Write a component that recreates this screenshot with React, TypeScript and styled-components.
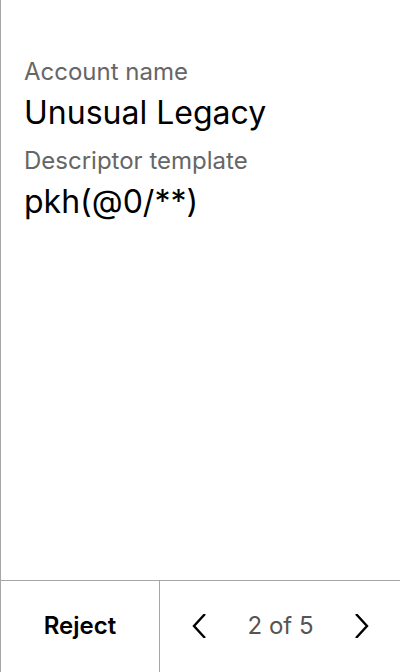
import { createGlobalStyle, styled } from 'styled-components';

const GlobalStyle = createGlobalStyle`
  html, body {
    margin: 0;
    padding: 0;
    background: #fff;
  }
  body {
    font-family: Inter, "Noto Sans", sans-serif;
  }
`;

const Screen = styled.div`
  width: 400px;
  height: 672px;
  box-sizing: border-box;
  border-left: 1px solid #a6a6a6;
  display: flex;
  flex-direction: column;
  background: #fff;
`;

const Body = styled.div`
  flex: 1;
  padding: 58px 24px 0 23px;
  display: flex;
  flex-direction: column;
  gap: 16px;
`;

const Field = styled.div`
  display: flex;
  flex-direction: column;
  gap: 9px;
`;

const Label = styled.div`
  font-size: 24px;
  line-height: 28px;
  color: #666;
`;

const Value = styled.div`
  font-size: 32px;
  line-height: 36px;
  color: #000;
`;

const Footer = styled.div`
  height: 92px;
  box-sizing: border-box;
  border-top: 1px solid #a6a6a6;
  display: flex;
`;

const RejectButton = styled.button`
  width: 159px;
  border: none;
  border-right: 1px solid #a6a6a6;
  background: none;
  font-family: inherit;
  font-size: 24px;
  font-weight: 600;
  color: #000;
  padding: 0 0 2px;
`;

const Pager = styled.div`
  flex: 1;
  display: flex;
  align-items: center;
  justify-content: space-between;
  padding: 0 27px 2px 28px;
`;

const ArrowButton = styled.button`
  width: 24px;
  height: 24px;
  padding: 0;
  border: none;
  background: none;
  display: flex;
  align-items: center;
  justify-content: center;
`;

const PageCount = styled.span`
  font-size: 24px;
  color: #555;
`;

const Chevron = ({ dir }: { dir: 'left' | 'right' }) => (
  <svg width="24" height="24" viewBox="0 0 24 24" fill="none">
    <path
      d={dir === 'left' ? 'M17 0 L6 12 L17 24' : 'M7 0 L18 12 L7 24'}
      stroke="#000"
      strokeWidth="2.4"
    />
  </svg>
);

const App = () => (
  <>
    <GlobalStyle />
    <Screen>
      <Body>
        <Field>
          <Label>Account name</Label>
          <Value>Unusual Legacy</Value>
        </Field>
        <Field>
          <Label>Descriptor template</Label>
          <Value>pkh(@0/**)</Value>
        </Field>
      </Body>
      <Footer>
        <RejectButton>Reject</RejectButton>
        <Pager>
          <ArrowButton>
            <Chevron dir="left" />
          </ArrowButton>
          <PageCount>2 of 5</PageCount>
          <ArrowButton>
            <Chevron dir="right" />
          </ArrowButton>
        </Pager>
      </Footer>
    </Screen>
  </>
);

export default App;
